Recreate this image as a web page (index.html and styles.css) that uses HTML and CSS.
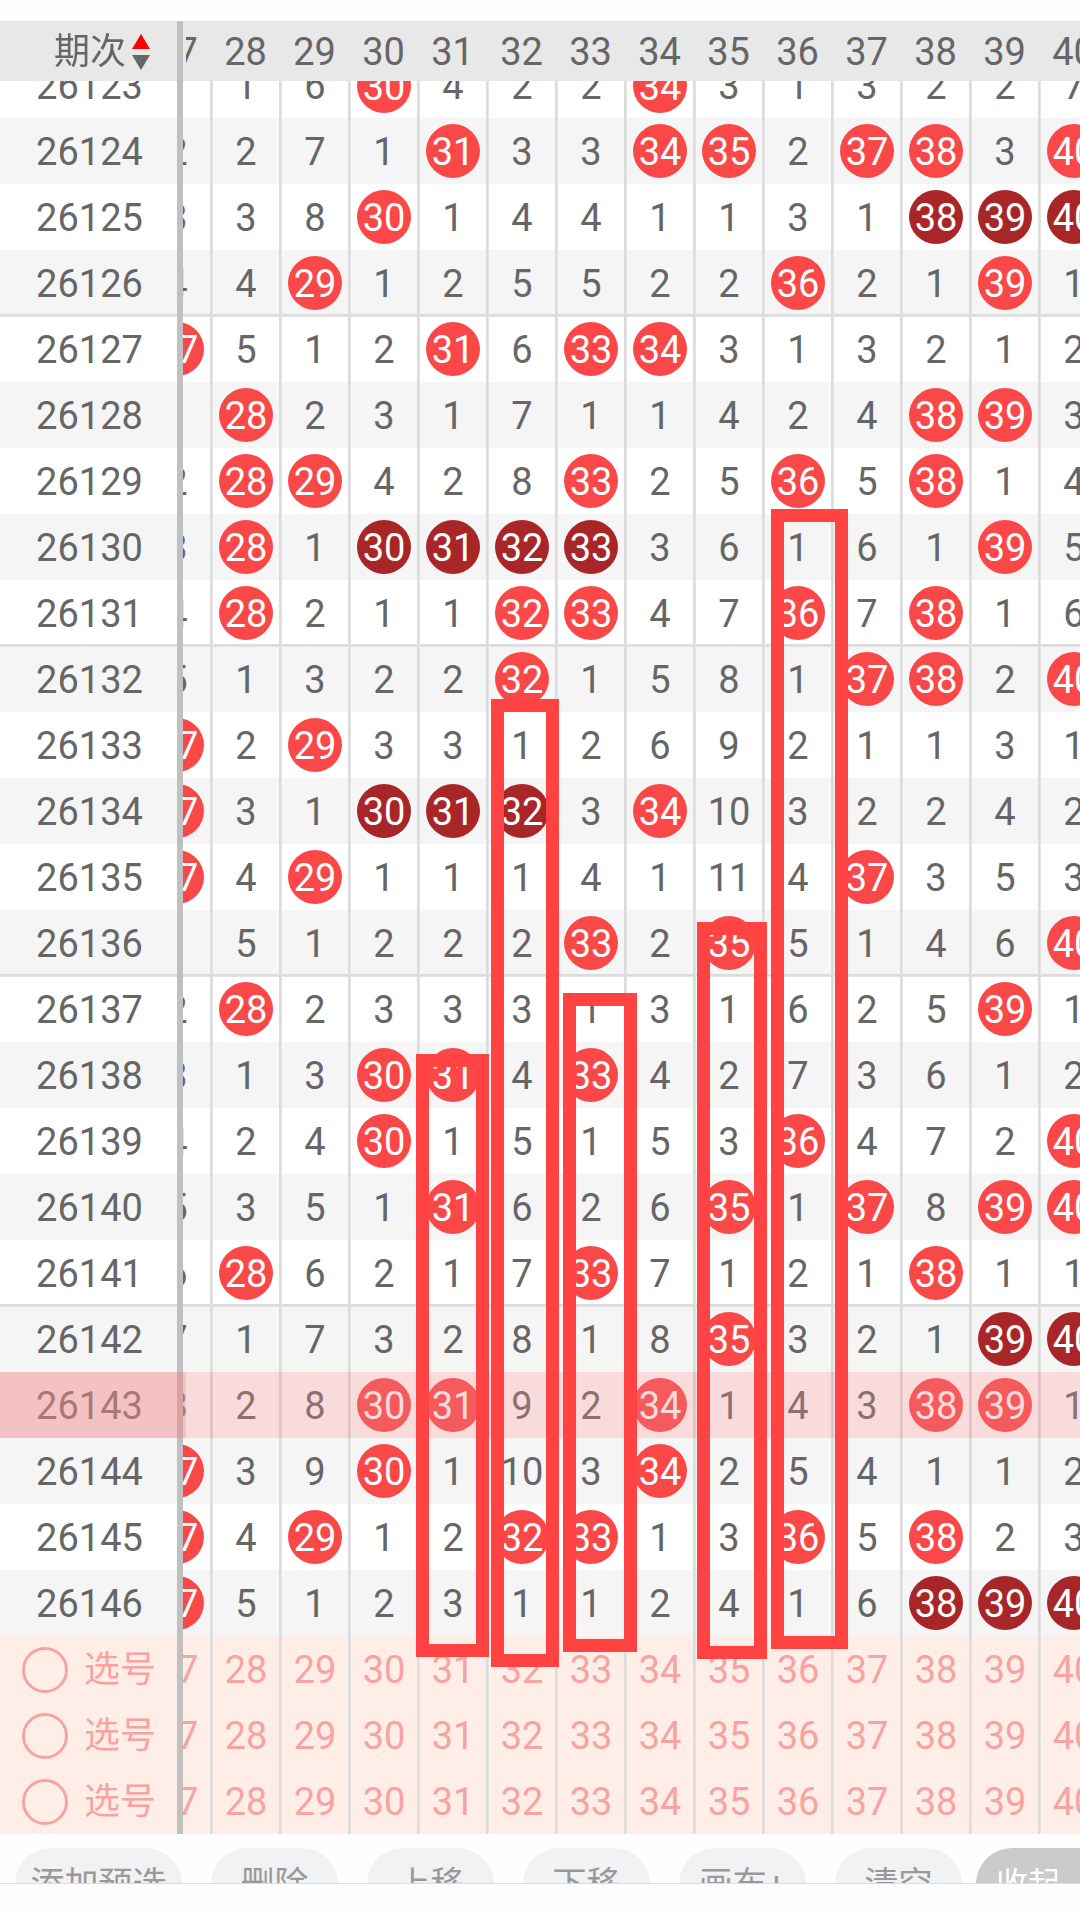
FILE: index.html
```html
<!DOCTYPE html>
<html lang="zh-CN">
<head>
<meta charset="utf-8">
<meta name="viewport" content="width=device-width, initial-scale=1">
<title>走势图</title>
<link rel="stylesheet" href="styles.css">
</head>
<body>
<main class="page">
  <section class="chart">
    <div class="scroller" id="scroller">
      <table class="trend">
        <colgroup id="cols"><col class="col-issue"></colgroup>
        <thead>
          <tr id="head">
            <th class="issue" scope="col">
              <button class="sort" type="button">期次
                <svg class="sort-icon" viewBox="0 0 18 36" aria-hidden="true">
                  <path d="M9 0L18 15H0Z" fill="#ff0000"/>
                  <path d="M0 21H18L9 36Z" fill="#666666"/>
                </svg>
              </button>
            </th>
          </tr>
        </thead>
        <tbody id="rows"></tbody>
      </table>
    </div>
    <div class="mark mark-31"></div>
    <div class="mark mark-32"></div>
    <div class="mark mark-33"></div>
    <div class="mark mark-35"></div>
    <div class="mark mark-36"></div>
  </section>
  <nav class="toolbar">
    <button class="tool tool-wide" type="button">添加预选</button>
    <button class="tool" type="button">删除</button>
    <button class="tool" type="button">上移</button>
    <button class="tool" type="button">下移</button>
    <button class="tool" type="button">画布+</button>
    <button class="tool" type="button">清空</button>
    <button class="tool-fold" type="button">收起</button>
  </nav>
</main>
<script src="chart.js"></script>
</body>
</html>
```
FILE: styles.css
```css
* { box-sizing: border-box; }

body {
  margin: 0;
  background: #fefefe;
  color: #666666;
  font-family: Roboto, "Noto Sans CJK SC", sans-serif;
  font-size: 38px;
}

button {
  margin: 0;
  padding: 0;
  border: 0;
  background: none;
  color: inherit;
  font-family: inherit;
}

.page { padding-top: 21px; }

.chart {
  position: relative;
  overflow: hidden;
}

.scroller {
  overflow-x: auto;
  scrollbar-width: none;
}

.trend {
  width: 1149px;
  table-layout: fixed;
  border-collapse: separate;
  border-spacing: 0;
}

.col-issue { width: 183px; }
.col-number { width: 69px; }

.trend th,
.trend td {
  position: relative;
  height: 66px;
  padding: 2px 0 0;
  font-weight: 400;
  line-height: 54px;
  text-align: center;
  vertical-align: middle;
  background: #ffffff;
}

.trend td {
  border-right: 2px solid #dcdcdc;
  border-left: 1px solid #e4e4e4;
}

.trend thead th {
  height: 60px;
  background: #e8e8e8;
  border-right: 2px solid #e8e8e8;
}

.trend .issue {
  position: sticky;
  left: 0;
  z-index: 2;
  padding-left: 2px;
  border-right: 6px solid #c0c0c0;
}

.trend thead .issue {
  border-right-color: #c0c0c0;
  box-shadow: 3px 0 0 #e8e8e8;
}

.sort {
  display: flex;
  align-items: center;
  gap: 6px;
  padding-left: 52px;
  font-size: 36px;
  line-height: 54px;
}

.sort-icon {
  width: 18px;
  height: 36px;
}

.trend .even th,
.trend .even td { background: #f5f5f5; }

.trend .group-end th,
.trend .group-end td { box-shadow: inset 0 -2px #dcdcdc; }

.trend .group-end + tr th,
.trend .group-end + tr td { box-shadow: inset 0 1px #e4e4e4; }

.trend .partial th,
.trend .partial td {
  height: 37px;
  padding-top: 0;
}

.partial .value {
  display: flex;
  align-items: flex-end;
  justify-content: center;
  height: 37px;
  padding-bottom: 5px;
  overflow: hidden;
}

.ball {
  display: block;
  flex: none;
  width: 54px;
  height: 54px;
  margin: -2px auto 0;
  border-radius: 50%;
  background: #fa4848;
  color: #ffffff;
  line-height: 56px;
}

.ball-run { background: #a82628; }

.current td::after,
.current th::before,
.current th::after {
  content: "";
  position: absolute;
  inset: 0 -2px 0 -1px;
  z-index: 1;
  background: rgba(235, 136, 140, 0.3);
}

.trend .current th::before { right: -6px; }
.trend .current th::after { right: -9px; }

.trend .pick th,
.trend .pick td {
  background: #feeee7;
  color: #f7a3a2;
}

.pick-label {
  display: flex;
  align-items: center;
  gap: 16px;
  padding-left: 20px;
  font-size: 36px;
}

.pick-radio {
  appearance: none;
  width: 46px;
  height: 46px;
  margin: 0;
  border: 3px solid #f7a3a2;
  border-radius: 50%;
}

.mark {
  position: absolute;
  z-index: 3;
  border: 13px solid #ff4242;
}

.mark-31 { left: 416px; top: 1033px; width: 73px; height: 603px; }
.mark-32 { left: 491px; top: 678px; width: 68px; height: 968px; }
.mark-33 { left: 563px; top: 972px; width: 74px; height: 659px; }
.mark-35 { left: 697px; top: 901px; width: 70px; height: 737px; }
.mark-36 { left: 771px; top: 488px; width: 77px; height: 1140px; }

.toolbar {
  display: flex;
  align-items: flex-start;
  gap: 29px;
  height: 50px;
  padding: 14px 0 0 15px;
  overflow: hidden;
  border-bottom: 1px solid #dddddd;
}

.tool,
.tool-fold {
  flex: none;
  width: 127px;
  height: 72px;
  border-radius: 36px;
  background: #f1f2f4;
  color: #999999;
  font-size: 34px;
  line-height: 72px;
  white-space: nowrap;
}

.tool-wide { width: 167px; }

.tool-fold {
  flex: 1 0 auto;
  width: auto;
  margin-left: -15px;
  padding: 0 20px;
  border-radius: 36px 0 0 36px;
  background: #cbcbcb;
  color: #ffffff;
  font-size: 32px;
  text-align: left;
}
```
FILE: chart.js
```js
// Columns 27-40. A number is the count of draws missed, "*" a drawn number,
// "#" a drawn number that belongs to a run of three or more.
const FIRST = 27;
const COUNT = 14;
const draws = {
  26123: "1 1 6 * 4 2 2 * 3 1 3 2 2 7",
  26124: "2 2 7 1 * 3 3 * * 2 * * 3 *",
  26125: "3 3 8 * 1 4 4 1 1 3 1 # # #",
  26126: "4 4 * 1 2 5 5 2 2 * 2 1 * 1",
  26127: "* 5 1 2 * 6 * * 3 1 3 2 1 2",
  26128: "1 * 2 3 1 7 1 1 4 2 4 * * 3",
  26129: "2 * * 4 2 8 * 2 5 * 5 * 1 4",
  26130: "3 * 1 # # # # 3 6 1 6 1 * 5",
  26131: "4 * 2 1 1 * * 4 7 * 7 * 1 6",
  26132: "5 1 3 2 2 * 1 5 8 1 * * 2 *",
  26133: "* 2 * 3 3 1 2 6 9 2 1 1 3 1",
  26134: "* 3 1 # # # 3 * 10 3 2 2 4 2",
  26135: "* 4 * 1 1 1 4 1 11 4 * 3 5 3",
  26136: "1 5 1 2 2 2 * 2 * 5 1 4 6 *",
  26137: "2 * 2 3 3 3 1 3 1 6 2 5 * 1",
  26138: "3 1 3 * * 4 * 4 2 7 3 6 1 2",
  26139: "4 2 4 * 1 5 1 5 3 * 4 7 2 *",
  26140: "5 3 5 1 * 6 2 6 * 1 * 8 * *",
  26141: "6 * 6 2 1 7 * 7 1 2 1 * 1 1",
  26142: "7 1 7 3 2 8 1 8 * 3 2 1 # #",
  26143: "8 2 8 * * 9 2 * 1 4 3 * * 1",
  26144: "* 3 9 * 1 10 3 * 2 5 4 1 1 2",
  26145: "* 4 * 1 2 * * 1 3 * 5 * 2 3",
  26146: "* 5 1 2 3 1 1 2 4 1 6 # # #"
};

const numbers = Array.from({ length: COUNT }, (_, i) => FIRST + i);
const cols = document.getElementById("cols");
const head = document.getElementById("head");
const rows = document.getElementById("rows");

numbers.forEach((n) => {
  cols.insertAdjacentHTML("beforeend", '<col class="col-number">');
  head.insertAdjacentHTML("beforeend", `<th scope="col">${n}</th>`);
});

const cell = (mark, n) => {
  if (mark === "*") return `<span class="ball">${n}</span>`;
  if (mark === "#") return `<span class="ball ball-run">${n}</span>`;
  return mark;
};

Object.entries(draws).forEach(([issue, marks], r) => {
  const classes = [];
  if (r === 0) classes.push("partial");
  if (issue % 2 === 0) classes.push("even");
  if (issue % 5 === 1 && issue < 26146) classes.push("group-end");
  if (issue === "26143") classes.push("current");
  const cells = marks.split(" ")
    .map((m, i) => `<td><div class="value">${cell(m, numbers[i])}</div></td>`)
    .join("");
  rows.insertAdjacentHTML("beforeend",
    `<tr class="${classes.join(" ")}"><th class="issue" scope="row"><div class="value">${issue}</div></th>${cells}</tr>`);
});

for (let p = 1; p <= 3; p++) {
  const cells = numbers.map((n) => `<td>${n}</td>`).join("");
  rows.insertAdjacentHTML("beforeend",
    `<tr class="pick"><th class="issue" scope="row"><label class="pick-label"><input class="pick-radio" type="radio" name="pick" value="${p}">选号</label></th>${cells}</tr>`);
}

// Open with column 27 partly behind the fixed issue column.
document.getElementById("scroller").scrollLeft = 40;
```
